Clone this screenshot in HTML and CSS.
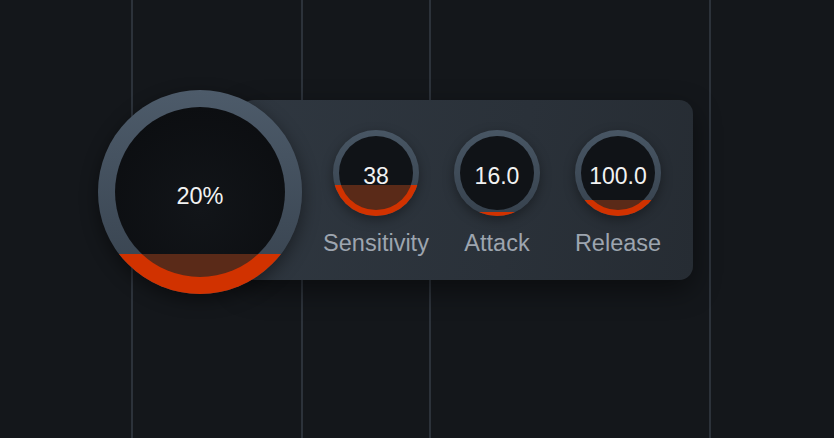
FILE: index.html
```html
<!DOCTYPE html>
<html>
<head>
<meta charset="utf-8">
<link rel="stylesheet" href="styles.css">
</head>
<body>
<div class="stage">
  <div class="knob knob-big">
    <svg viewBox="0 0 204 204" width="204" height="204">
      <defs>
        <linearGradient id="ringBig" x1="0" y1="0" x2="0" y2="1">
          <stop offset="0" stop-color="#4d5b6a"/>
          <stop offset="1" stop-color="#37424e"/>
        </linearGradient>
        <radialGradient id="innerBig" cx="0.5" cy="0.6" r="0.6">
          <stop offset="0" stop-color="#121519"/>
          <stop offset="1" stop-color="#0c0e11"/>
        </radialGradient>
        <clipPath id="fillBig"><rect x="0" y="164" width="204" height="40"/></clipPath>
      </defs>
      <circle cx="102" cy="102" r="102" fill="url(#ringBig)"/>
      <circle cx="102" cy="102" r="85" fill="url(#innerBig)"/>
      <g clip-path="url(#fillBig)">
        <circle cx="102" cy="102" r="102" fill="#d13200"/>
        <circle cx="102" cy="102" r="85" fill="#5a2a18"/>
      </g>
    </svg>
    <span class="value value-big">20%</span>
  </div>
  <div class="panel">
    <div class="control">
      <div class="knob knob-small">
        <svg viewBox="0 0 86 86" width="86" height="86">
          <defs>
            <linearGradient id="ringS" x1="0" y1="0" x2="0" y2="1">
              <stop offset="0" stop-color="#485664"/>
              <stop offset="1" stop-color="#37424e"/>
            </linearGradient>
            <clipPath id="fill1"><rect x="0" y="55" width="86" height="31"/></clipPath>
            <clipPath id="fill2"><rect x="0" y="82" width="86" height="4"/></clipPath>
            <clipPath id="fill3"><rect x="0" y="70" width="86" height="16"/></clipPath>
          </defs>
          <circle cx="43" cy="43" r="43" fill="url(#ringS)"/>
          <circle cx="43" cy="43" r="37" fill="#101317"/>
          <g clip-path="url(#fill1)">
            <circle cx="43" cy="43" r="43" fill="#d13200"/>
            <circle cx="43" cy="43" r="37" fill="#5a2a18"/>
          </g>
        </svg>
        <span class="value">38</span>
      </div>
      <span class="label">Sensitivity</span>
    </div>
    <div class="control">
      <div class="knob knob-small">
        <svg viewBox="0 0 86 86" width="86" height="86">
          <circle cx="43" cy="43" r="43" fill="url(#ringS)"/>
          <circle cx="43" cy="43" r="37" fill="#101317"/>
          <g clip-path="url(#fill2)">
            <circle cx="43" cy="43" r="43" fill="#d13200"/>
            <circle cx="43" cy="43" r="37" fill="#5a2a18"/>
          </g>
        </svg>
        <span class="value">16.0</span>
      </div>
      <span class="label">Attack</span>
    </div>
    <div class="control">
      <div class="knob knob-small">
        <svg viewBox="0 0 86 86" width="86" height="86">
          <circle cx="43" cy="43" r="43" fill="url(#ringS)"/>
          <circle cx="43" cy="43" r="37" fill="#101317"/>
          <g clip-path="url(#fill3)">
            <circle cx="43" cy="43" r="43" fill="#d13200"/>
            <circle cx="43" cy="43" r="37" fill="#5a2a18"/>
          </g>
        </svg>
        <span class="value">100.0</span>
      </div>
      <span class="label">Release</span>
    </div>
  </div>
</div>
</body>
</html>
```
FILE: styles.css
```css
html, body {
  margin: 0;
  height: 100%;
}
body {
  background-color: #14171b;
  background-image:
    linear-gradient(#2c323a, #2c323a),
    linear-gradient(#2c323a, #2c323a),
    linear-gradient(#2c323a, #2c323a),
    linear-gradient(#2c323a, #2c323a);
  background-size: 2px 100%;
  background-repeat: no-repeat;
  background-position: 131px 0, 301px 0, 429px 0, 709px 0;
  font-family: "Liberation Sans", Arial, sans-serif;
  overflow: hidden;
}
.stage {
  display: flex;
  align-items: flex-start;
  padding: 90px 0 0 98px;
}
.knob {
  display: grid;
  place-items: center;
}
.knob > svg, .knob > .value {
  grid-area: 1 / 1;
}
.knob > svg {
  display: block;
}
.knob-big {
  position: relative;
  z-index: 2;
  width: 204px;
  height: 204px;
  border-radius: 50%;
  box-shadow: 0 6px 18px rgba(0, 0, 0, 0.45);
}
.knob-small {
  width: 86px;
  height: 86px;
  border-radius: 50%;
  box-shadow: 0 4px 12px rgba(0, 0, 0, 0.35);
}
.value {
  color: #f2f2f2;
  font-size: 23px;
  padding-top: 6px;
}
.value-big {
  font-size: 23.5px;
  padding-top: 8px;
}
.panel {
  position: relative;
  z-index: 1;
  margin: 10px 0 0 -62px;
  width: 453px;
  height: 180px;
  box-sizing: border-box;
  padding: 30px 0 0 76px;
  border-radius: 14px;
  background: linear-gradient(100deg, #2f3740 0%, #2a3139 60%, #262c33 100%);
  box-shadow: 0 10px 28px rgba(0, 0, 0, 0.45);
  display: flex;
  gap: 1px;
}
.control {
  width: 120px;
  display: flex;
  flex-direction: column;
  align-items: center;
}
.label {
  margin-top: 15px;
  color: #9da5af;
  font-size: 23.5px;
  line-height: 24px;
}
```
